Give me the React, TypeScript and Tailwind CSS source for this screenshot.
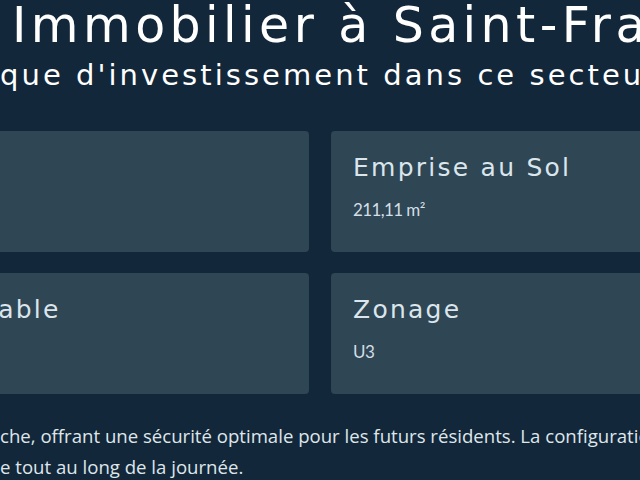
import type { ReactNode } from 'react';

// Row whose lead text hangs off to the left of a fixed anchor
function Hang({ lead, anchor, children, className = '' }: { lead: string; anchor: string; children: ReactNode; className?: string }) {
  return (
    <div className={`flex whitespace-nowrap ${className}`}>
      <span className={`flex shrink-0 justify-end ${anchor}`}>{lead}&nbsp;</span>
      <span>{children}</span>
    </div>
  );
}

const cards = [
  { label: 'Superficie', value: '1 250 m²' },
  { label: 'Emprise au Sol', value: '211,11 m²' },
  { label: 'Surface Habitable', value: '180 m²' },
  { label: 'Zonage', value: 'U3' },
];

export default function App() {
  return (
    <div className="w-[640px] h-[480px] overflow-hidden bg-[#13273a] font-['DejaVu_Sans',sans-serif]">
      <header>
        <Hang lead="Investissement" anchor="w-[12px]" className="text-[49px] leading-[52px] tracking-[0.09em] text-white">
          Immobilier à Saint-François
        </Hang>
        <Hang lead="Découvrez le potentiel uni" anchor="w-0" className="mt-[6px] text-[29px] leading-[34px] tracking-[0.105em] text-white">
          que d'investissement dans ce secteur
        </Hang>
      </header>

      <section className="mt-[39px] -ml-[223px] w-[1086px] grid grid-cols-2 gap-x-[22px] gap-y-[21px]">
        {cards.map(c => (
          <div key={c.label} className="h-[121px] rounded-[4px] bg-[#2f4655] px-[22px] pt-[20px]">
            <h3 className="text-[25px] leading-[34px] tracking-[0.09em] text-[#dbe5ec]">{c.label}</h3>
            <p className="mt-[13px] text-[17px] leading-[24px] tracking-[-0.6px] text-[#d3dee6] font-['Lato',sans-serif]">{c.value}</p>
          </div>
        ))}
      </section>

      <div className="mt-[26px] text-[18.6px] leading-[31px] text-[#dfe6ea] font-['Open_Sans',sans-serif]">
        <Hang lead="Le terrain se trouve dans un quartier calme et pro" anchor="w-0">
          che, offrant une sécurité optimale pour les futurs résidents. La configuration de la parcelle
        </Hang>
        <Hang lead="permet une luminosité naturelle abondant" anchor="w-0">
          e tout au long de la journée.
        </Hang>
      </div>
    </div>
  );
}
